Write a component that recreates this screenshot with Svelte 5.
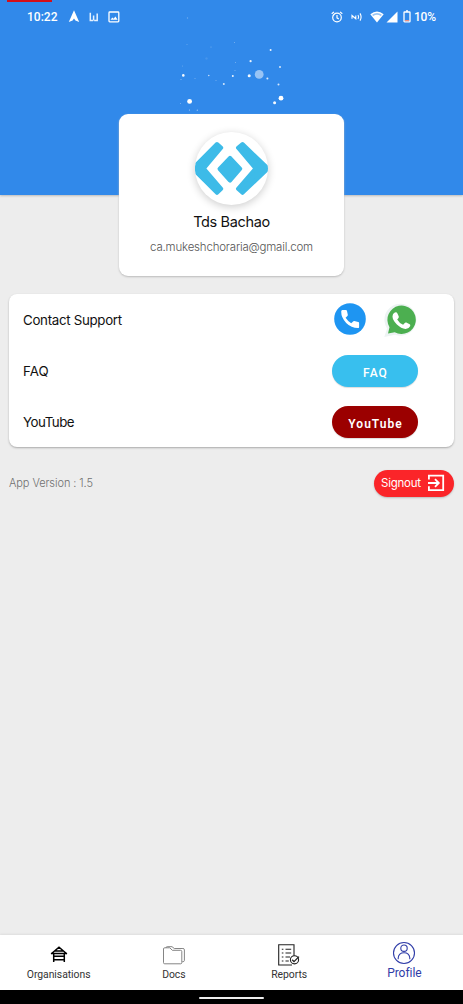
<script>
  const stars = [
    [187.5, 18, 0.7, 0.3], [211, 47, 0.5, 0.4], [183.3, 75.4, 1.3, 0.95], [181, 79.5, 0.5, 0.5],
    [195, 78.5, 0.5, 0.4], [208.8, 75.5, 0.7, 0.8], [206.5, 58.5, 1.2, 0.1], [223.8, 84, 1, 0.8],
    [216, 80.5, 0.5, 0.4], [232.8, 76, 1, 0.9], [235, 70.5, 0.5, 0.4], [235.5, 62.5, 0.5, 0.4],
    [250.6, 61.2, 1.1, 0.9], [249.2, 75.8, 1.5, 0.95], [259.2, 74.4, 4.4, 0.5], [267.4, 78.4, 1, 0.85],
    [270.6, 50, 1, 0.9], [280, 67, 1, 0.8], [278.5, 84.5, 1, 0.8], [281, 98.2, 2.4, 1],
    [274.6, 102.8, 1.5, 0.95], [189.6, 101.4, 2.4, 1], [180.5, 103.5, 0.5, 0.4], [189.5, 110, 0.6, 0.6],
    [197.3, 110.2, 0.6, 0.6], [187, 44.5, 0.5, 0.3], [234.5, 42.5, 0.5, 0.4], [182.5, 66, 0.5, 0.3]
  ];
</script>

<main class="screen">
  <header class="hero">
    <span class="recording"></span>
    <svg class="stars" width="463" height="114" viewBox="0 0 463 114">
      {#each stars as [x, y, r, opacity]}
        <circle cx={x} cy={y} {r} fill="#fff" {opacity} />
      {/each}
    </svg>
    <div class="status">
      <div class="status-left">
        <span class="clock">10:22</span>
        <svg width="12" height="13" viewBox="0 0 12 13"><path d="M6 .3 11.2 12 7.4 10.5 6 8.5 4.6 10.5.8 12Z" fill="#fff" /></svg>
        <svg width="10" height="10" viewBox="0 0 10 10"><path d="M1.3 .8V8.4H4.2M4.6 3.4V8.4M8.2 1.5V8.4H5.2" fill="none" stroke="#e4f1ff" stroke-width="1.5" /></svg>
        <svg width="12" height="12" viewBox="0 0 12 12"><rect x="1" y="1" width="9.8" height="9.8" rx=".8" fill="none" stroke="#fff" stroke-width="1.3" /><path d="m2.5 8.8 1.8-2.4 1.3 1.4 1.8-2.3 2.2 3.3Z" fill="#fff" /></svg>
      </div>
      <div class="status-right">
        <svg width="12" height="12" viewBox="0 0 12 12" fill="none" stroke="#fff" stroke-width="1.2"><circle cx="6" cy="6.5" r="4.3" /><path d="M.7 2.8 3 .9M11.3 2.8 9 .9M6 4v2.8l1.8 1.1" /></svg>
        <svg class="nfc" width="12" height="10" viewBox="0 0 12 10" fill="none" stroke="#fff" stroke-width="1.1"><path d="M1 6.8V3.5l3.8 3.2V3.4M7 3q1.3 2 0 4M9 1.4q2.2 3.6 0 7.2" /></svg>
        <svg class="wifi" width="14" height="12" viewBox="0 0 14 12"><path d="M.3 3.2Q7-2.2 13.7 3.2L7 11.6Z" fill="#fff" /><path d="M2.1 3.7Q7 .2 11.9 3.7L10.8 5Q7 2.3 3.2 5Z" fill="#3189ea" opacity=".5" /></svg>
        <svg class="signal" width="12" height="12" viewBox="0 0 12 12"><path d="M11.5.5v11H.5Z" fill="#fff" /></svg>
        <svg class="battery" width="8" height="13" viewBox="0 0 8 13"><path d="M3 1h2" stroke="#fff" stroke-width="1.6" /><rect x="1" y="2" width="6" height="9.8" rx=".6" fill="none" stroke="#fff" stroke-width="1.3" /><path d="M2 10.6h4" stroke="#f0907f" stroke-width="1.2" /></svg>
        <span class="percent">10%</span>
      </div>
    </div>
  </header>

  <section class="profile">
    <div class="avatar">
      <svg width="73" height="73" viewBox="0 0 73 73">
        <g fill="#3dbbe8" stroke="#3dbbe8" stroke-width="4" stroke-linejoin="round">
          <path d="M22 12 26.2 15.8 8.8 36.5 26.2 56.8 22 60.8-1 38V35Z" />
          <path d="M47.5 12 43 15.8 60.5 36.5 43 56.8 47.5 60.8 71.5 38V35Z" />
          <path d="M35 25.8 45.3 36.8 35 48.6 24.5 36.8Z" />
        </g>
      </svg>
    </div>
    <h1>Tds Bachao</h1>
    <p>ca.mukeshchoraria@gmail.com</p>
  </section>

  <section class="options">
    <div class="row">
      <span class="contact">Contact Support</span>
      <div class="actions contacts">
        <svg width="32" height="32" viewBox="0 0 32 32"><circle cx="16" cy="16" r="15.8" fill="#1e95f2" /><path d="M7.2 8.6Q7.2 7.2 8.4 7.1L11.8 7.1Q12.8 7.1 13 8L13.8 11.8Q13.9 12.5 13.4 13L11.6 14.8Q13.7 18.1 17.2 20.2L19.1 18.4Q19.6 17.9 20.3 18.1L24.2 19Q25.1 19.2 25.1 20.1V23.9Q25.1 25.1 23.9 25.1Q17.4 25 12.2 19.9Q7.1 14.8 7.2 8.6Z" fill="#fff" /></svg>
        <svg width="34" height="35" viewBox="0 0 34 35"><path d="M.3 34 3.1 25.5A16 16 0 1 1 11 31.7Z" fill="#edf3f3" /><path d="M4 30.4 5.5 24.2A14.2 14.2 0 1 1 10.7 29.2Z" fill="#4caf50" /><path d="M10.8 9.5Q12.5 8.5 13.3 10.2L14.7 13.3Q15.1 14.3 14.3 15.2L13.2 16.6Q15.2 20.2 19.1 21.8L20.8 19.9Q21.4 19.2 22.3 19.6L25.7 21.3Q26.7 21.9 26.1 23.2Q24.8 26 21.4 25.9Q17.3 25.7 12.9 21.5Q8.4 17.2 8.5 13.3Q8.5 10.8 10.8 9.5Z" fill="#fff" /></svg>
      </div>
    </div>
    <div class="row">
      <span class="faq-label">FAQ</span>
      <div class="actions"><button class="pill">FAQ</button></div>
    </div>
    <div class="row">
      <span class="youtube-label">YouTube</span>
      <div class="actions"><button class="pill youtube">YouTube</button></div>
    </div>
  </section>

  <div class="meta">
    <span class="version">App Version : 1.5</span>
    <button class="signout">
      <span>Signout</span>
      <svg width="18" height="18" viewBox="0 0 18 18" fill="none" stroke="#fff" stroke-width="1.8"><path d="M1.9 5.6V1.7H16.2V16.2H1.9V12.3M1 9h10.5M8 5.2 11.8 9 8 12.8" /></svg>
    </button>
  </div>

  <nav>
    <a class="tab" href="#organisations">
      <svg width="22" height="24" viewBox="0 0 22 24" fill="none" stroke="#000" stroke-width="1.5"><path d="M3 11 11 4.2 19 11M3 10.5h16M7.2 8h7.6M5.7 11v7.9M16.3 11v7.9M6 13.3h10M6 16.7h10" /></svg>
      <span>Organisations</span>
    </a>
    <a class="tab docs" href="#docs">
      <svg width="24" height="24" viewBox="0 0 24 24" fill="none" stroke="#777" stroke-width=".9" stroke-linejoin="round"><path d="M1.5 6Q1.5 4.8 2.7 4.8H7.8L10.3 7.3H18.5Q19.8 7.3 19.8 8.5V19.6Q19.8 20.8 18.6 20.8H2.7Q1.5 20.8 1.5 19.6ZM4 4.7Q4.1 3.7 5.2 3.7H10L12.3 5.5H20.9Q22.4 5.5 22.4 6.8V17.5Q22.4 18.8 20.2 18.8" /></svg>
      <span>Docs</span>
    </a>
    <a class="tab reports" href="#reports">
      <svg width="24" height="24" viewBox="0 0 24 24" fill="none" stroke="#222" stroke-width="1.1"><path d="M17 13V1.7H1.7V22H15" /><path d="M4.8 6.2h1.6M4.8 10h1.6M4.8 14h1.6M4.8 18h1.6M8.5 6.2h5.7M8.5 10h5.7M8.5 14h4.5M8.5 18h3.3" stroke-width="1.1" /><circle cx="17.5" cy="16.8" r="4.1" fill="#fff" /><path d="m15.2 16.8 1.8 1.8 5-5" stroke-width="1.3" /></svg>
      <span>Reports</span>
    </a>
    <a class="tab profile-tab" href="#profile">
      <svg width="24" height="24" viewBox="0 0 24 24" fill="none" stroke="#303da8" stroke-width="1.1"><circle cx="12" cy="12" r="10.5" /><circle cx="12" cy="7.2" r="3.2" /><path d="M6.2 18.2V17Q6.6 11.8 12 11.8T17.8 17v1.2" /></svg>
      <span>Profile</span>
    </a>
  </nav>
  <footer><span></span></footer>
</main>

<style>
  :global(body) { margin: 0; }
  .screen { width: 463px; height: 1004px; display: flex; flex-direction: column; overflow: hidden; background: #ededed; font-family: Inter, sans-serif; color: #111; }
  svg { display: block; flex: none; }
  button { border: 0; padding: 0; margin: 0; color: #fff; }
  .hero { position: relative; height: 195px; flex: none; background: #3189ea; box-shadow: 0 1px 2px #bbb; }
  .recording { position: absolute; left: 7px; top: 0; width: 45px; height: 2px; background: #d50f18; }
  .stars { position: absolute; inset: 0; }
  .status { display: flex; justify-content: space-between; align-items: center; height: 33px; padding: 0 27px; color: #fff; font: 500 12px/16px Roboto, sans-serif; }
  .status-left, .status-right { display: flex; align-items: center; }
  .status-left { gap: 9px; }
  .clock { width: 32px; white-space: nowrap; }
  .nfc { margin-left: 8px; }
  .wifi { margin-left: 7px; }
  .signal { margin-left: 2px; }
  .battery { margin-left: 5px; }
  .percent { margin-left: 3px; width: 22px; letter-spacing: -.2px; }
  .profile { position: relative; box-sizing: border-box; width: 225px; height: 162px; flex: none; margin: -81px auto 0; padding-top: 18px; display: flex; flex-direction: column; align-items: center; border-radius: 9px; background: #fff; box-shadow: 0 1px 2px #bbb; }
  .avatar { width: 73px; height: 73px; border-radius: 50%; overflow: hidden; background: #fff; box-shadow: 0 2px 9px #0003; }
  h1 { margin: 7px 0 0; font-weight: 400; font-size: 14.5px; line-height: 20px; letter-spacing: -.35px; white-space: nowrap; }
  p { margin: 7px 0 0; font-size: 11.5px; line-height: 16px; letter-spacing: -.2px; color: #555; font-weight: 300; }
  .options { box-sizing: border-box; margin: 18px 9px 0; height: 153px; padding: 0 36px 0 14px; flex: none; border-radius: 8px; background: #fff; box-shadow: 0 1px 2px #aaa; }
  .row { height: 51px; display: flex; align-items: center; justify-content: space-between; font-size: 13.3px; letter-spacing: -.3px; }
  .row > span { margin-top: 1px; }
  .faq-label { letter-spacing: .1px; }
  .youtube-label { letter-spacing: -.5px; }
  .actions { width: 86px; display: flex; }
  .row:first-child .actions { margin-top: -1px; }
  .contacts { box-sizing: border-box; padding-left: 2px; gap: 18px; align-items: center; }
  .contacts svg:last-child { margin-top: 2px; }
  .pill { width: 86px; height: 32px; border-radius: 16px; background: #38bfee; font: 500 12px/32px Roboto, sans-serif; letter-spacing: 1.1px; padding: 2px 0 0 1px; box-shadow: 0 1px 1px #ddd; }
  .youtube { background: #9b0000; font-weight: 600; letter-spacing: 1px; }
  .meta { height: 26px; margin: 23px 9px 0; flex: none; display: flex; align-items: center; justify-content: space-between; }
  .version { font-size: 11px; font-weight: 300; letter-spacing: -.08px; color: #707070; }
  .signout { box-sizing: border-box; width: 80px; height: 27px; padding: 0 9px 0 7px; border-radius: 14px; display: flex; align-items: center; justify-content: space-between; background: #fb2529; box-shadow: 0 1px 2px #bbb; font: 400 11.5px/16px Inter, sans-serif; letter-spacing: -.25px; }
  nav { box-sizing: border-box; margin-top: auto; height: 55px; padding: 0 1px; flex: none; display: grid; grid-template-columns: repeat(4, 1fr); background: #fff; box-shadow: 0 -1px 2px #ddd; }
  .tab { display: flex; flex-direction: column; align-items: center; padding-top: 8px; text-decoration: none; color: #333; font: 400 10.4px/14px Roboto, sans-serif; letter-spacing: -.05px; }
  .tab svg { height: 24px; }
  .tab span { margin-top: 1px; }
  .profile-tab { padding-top: 6px; color: #303da8; font-size: 12px; }
  footer { height: 14px; flex: none; display: flex; align-items: center; justify-content: center; background: #000; }
  footer span { width: 65px; height: 2px; margin-top: 1px; border-radius: 1px; background: #eee; }
</style>
